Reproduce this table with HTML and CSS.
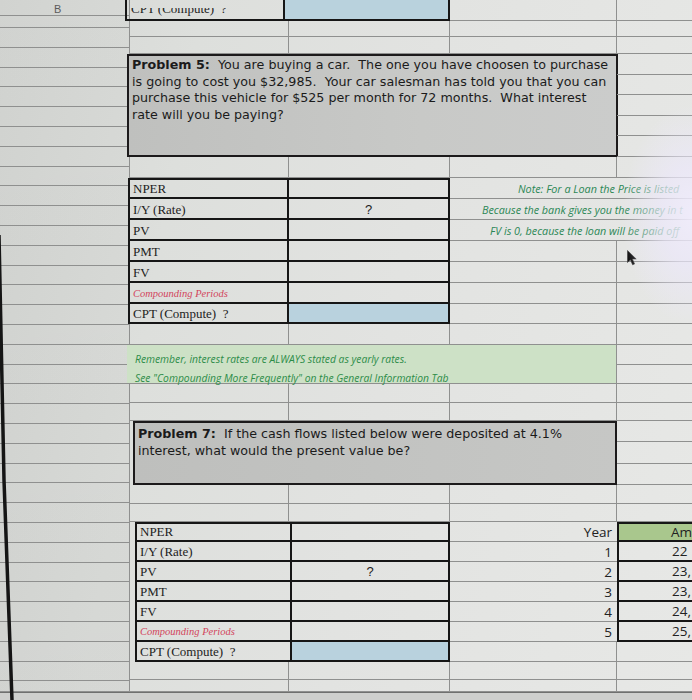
FILE: index.html
```html
<!DOCTYPE html>
<html lang="en">
<head>
<meta charset="utf-8">
<title>Problem sheet</title>
<link rel="stylesheet" href="styles.css">
</head>
<body>
<div class="screen">
  <div class="sheet">
    <div class="pane-a">
      <div class="a-hdr">B</div>
      <div class="a-row a-first"></div>
      <div class="a-row"></div><div class="a-row"></div><div class="a-row"></div><div class="a-row"></div><div class="a-row"></div>
      <div class="a-row"></div><div class="a-row"></div><div class="a-row"></div><div class="a-row"></div><div class="a-row"></div>
      <div class="a-row"></div><div class="a-row"></div><div class="a-row"></div><div class="a-row"></div><div class="a-row"></div>
      <div class="a-row"></div><div class="a-row"></div><div class="a-row"></div><div class="a-row"></div><div class="a-row"></div>
      <div class="a-row"></div><div class="a-row"></div><div class="a-row"></div><div class="a-row"></div><div class="a-row"></div>
      <div class="a-row"></div><div class="a-row"></div><div class="a-row"></div><div class="a-row"></div><div class="a-row"></div>
      <div class="a-row"></div><div class="a-row"></div><div class="a-row"></div>
      <div class="a-row a-last"></div>
    </div>

    <!-- row 1 -->
    <div class="top-table">
      <div class="tt-label"><span class="tt-text">CPT (Compute)&nbsp; ?</span></div>
      <div class="tt-value"></div>
    </div>
    <div class="c"></div><div class="c e"></div>
    <!-- rows 2-3 -->
    <div class="c"></div><div class="c"></div><div class="c"></div><div class="c e"></div>
    <div class="c"></div><div class="c"></div><div class="c"></div><div class="c e"></div>

    <!-- rows 4-8 -->
    <div class="problem p5">
      <p><b>Problem 5:</b>&nbsp; You are buying a car.&nbsp; The one you have choosen to purchase<br>is going to cost you $32,985.&nbsp; Your car salesman has told you that you can<br>purchase this vehicle for $525 per month for 72 months.&nbsp; What interest<br>rate will you be paying?</p>
    </div>
    <div class="c e"></div><div class="c e"></div><div class="c e"></div><div class="c e"></div><div class="c e"></div>

    <!-- row 9 -->
    <div class="c"></div><div class="c"></div><div class="c"></div><div class="c e"></div>

    <!-- rows 10-16 -->
    <div class="tvm t1">
      <div class="tl first">NPER</div><div class="tv first"></div>
      <div class="tl">I/Y (Rate)</div><div class="tv">?</div>
      <div class="tl">PV</div><div class="tv"></div>
      <div class="tl">PMT</div><div class="tv"></div>
      <div class="tl">FV</div><div class="tv"></div>
      <div class="tl cp">Compounding Periods</div><div class="tv"></div>
      <div class="tl">CPT (Compute)&nbsp; ?</div><div class="tv blue"></div>
    </div>
    <div class="note n1">Note: For a Loan the Price is listed</div>
    <div class="note n2">Because the bank gives you the money in t</div>
    <div class="note n3">FV is 0, because the loan will be paid off</div>
    <div class="c"></div>
    <div class="c e cur">
      <svg class="pointer" width="11" height="16" viewBox="0 0 11 16"><path d="M0.5 0.5 L0.5 12.5 L3.4 9.8 L5.6 14.8 L7.6 13.9 L5.4 9 L9.2 9 Z" fill="#111" stroke="#3a3a3a" stroke-width="0.6"/></svg>
    </div>
    <div class="c"></div><div class="c e"></div>
    <div class="c"></div><div class="c e"></div>
    <div class="c"></div><div class="c e"></div>

    <!-- row 17 -->
    <div class="c"></div><div class="c"></div><div class="c"></div><div class="c e"></div>

    <!-- rows 18-19 -->
    <div class="green">
      <p>Remember, interest rates are ALWAYS stated as yearly rates.</p>
      <p>See "Compounding More Frequently" on the General Information Tab</p>
    </div>
    <div class="c e"></div><div class="c e"></div>

    <!-- rows 20-21 -->
    <div class="c"></div><div class="c"></div><div class="c"></div><div class="c e"></div>
    <div class="c"></div><div class="c"></div><div class="c"></div><div class="c e"></div>

    <!-- rows 22-24 -->
    <div class="problem p7">
      <p><b>Problem 7:</b>&nbsp; If the cash flows listed below were deposited at 4.1%<br>interest, what would the present value be?</p>
    </div>
    <div class="c e"></div><div class="c e"></div><div class="c e"></div>

    <!-- rows 25-26 -->
    <div class="c"></div><div class="c"></div><div class="c"></div><div class="c e"></div>
    <div class="c"></div><div class="c"></div><div class="c"></div><div class="c e"></div>

    <!-- rows 27-33 -->
    <div class="tvm t2">
      <div class="tl first">NPER</div><div class="tv first"></div>
      <div class="tl">I/Y (Rate)</div><div class="tv"></div>
      <div class="tl">PV</div><div class="tv">?</div>
      <div class="tl">PMT</div><div class="tv"></div>
      <div class="tl">FV</div><div class="tv"></div>
      <div class="tl cp">Compounding Periods</div><div class="tv"></div>
      <div class="tl">CPT (Compute)&nbsp; ?</div><div class="tv blue"></div>
    </div>
    <div class="yr">Year</div><div class="amt hd">Am</div>
    <div class="yr">1</div><div class="amt">22</div>
    <div class="yr">2</div><div class="amt">23,</div>
    <div class="yr">3</div><div class="amt">23,</div>
    <div class="yr">4</div><div class="amt">24,</div>
    <div class="yr">5</div><div class="amt">25,</div>
    <div class="c"></div><div class="c e"></div>

    <!-- rows 34-35 -->
    <div class="c"></div><div class="c"></div><div class="c"></div><div class="c e"></div>
    <div class="c"></div><div class="c"></div><div class="c"></div><div class="c e"></div>
  </div>
  <div class="bottom"></div>

  <svg class="edge" width="20" height="700" viewBox="0 0 20 700"><polyline points="-1,235 4,480 12,700" fill="none" stroke="#151515" stroke-width="3.5"/></svg>
  <div class="glare"></div>
</div>
</body>
</html>
```

FILE: styles.css
```css
* { box-sizing: border-box; margin: 0; padding: 0; }
html, body { width: 692px; height: 700px; overflow: hidden; }
body { background: #d8dad7; font-family: "DejaVu Sans", Verdana, sans-serif; color: #1d1d1d; }

.screen {
  position: relative;
  width: 692px;
  height: 700px;
  overflow: hidden;
  background: linear-gradient(100deg, #d4d6d3 0%, #dddfdc 25%, #e2e3e1 55%, #e7e8e6 100%);
}

.sheet {
  display: grid;
  width: 692px;
  grid-template-columns: 130px 159px 161px 167px 75px;
  grid-template-rows:
    21px 16px 17px
    21px 20px 21px 20px 21px
    21px
    21px 21px 21px 21px 21px 21px 20px
    21px
    20px 19px
    19px 18px
    21px 22px 21px
    19px 18px
    20px 20px 20px 20px 20px 20px 20px
    18px 12px;
}

.c { border-right: 1px solid #8f908f; border-bottom: 1px solid #8f908f; }
.c.e { border-right: 0; }

/* frozen column pane */
.pane-a {
  grid-column: 1;
  grid-row: 1 / -1;
  display: flex;
  flex-direction: column;
  overflow: hidden;
  border-right: 1px solid #8f908f;
  background: linear-gradient(180deg, rgba(0,0,0,0.015), rgba(0,0,0,0.035));
}
.a-hdr {
  flex: 0 0 15px;
  border-bottom: 1px solid #8f908f;
  font: 11px "Liberation Sans", Arial, sans-serif;
  color: #5b5b5b;
  line-height: 12px;
  padding: 3px 0 0 54px;
}
.a-row { flex: 0 0 19.8px; border-bottom: 1px solid #8f908f; }
.a-first { flex-basis: 12px; }
.a-last { flex: 1 1 auto; }

/* partial table at the very top */
.top-table {
  grid-column: span 2;
  display: grid;
  grid-template-columns: 160px 1fr;
  margin-left: -5px;
}
.tt-label {
  border-left: 2px solid #161616;
  border-right: 2px solid #161616;
  border-bottom: 2px solid #161616;
  display: flex;
  align-items: flex-end;
  padding: 0 0 3px 4px;
}
.tt-text {
  display: block;
  font: 13px "Liberation Serif", "Times New Roman", serif;
  line-height: 14px;
  clip-path: inset(6px 0 0 0);
}
.tt-value {
  background: #b9d2dd;
  border-right: 2px solid #161616;
  border-bottom: 2px solid #161616;
}

/* problem boxes */
.problem {
  grid-column: span 3;
  border: 2px solid #1c1a1b;
  background: #c5c6c4;
  font-size: 12.7px;
  line-height: 16.5px;
  padding: 1px 3px;
  color: #1b1b1b;
  white-space: nowrap;
}
.p5 {
  grid-row: span 5;
  margin: 0 -1px 0 -3px;
  background: linear-gradient(90deg, #bfc0be, #c8c9c7 60%, #cbcccb);
}
.p7 {
  grid-row: span 3;
  margin-left: 3px;
  padding-top: 3px;
  background: linear-gradient(90deg, #bebfbd, #c6c7c5);
}

/* TVM tables */
.tvm {
  grid-column: span 2;
  display: grid;
  font: 13px "Liberation Serif", "Times New Roman", serif;
}
.t1 {
  grid-row: span 7;
  margin-left: -2px;
  grid-template-columns: 161px 1fr;
  grid-template-rows: 21px 21px 21px 21px 21px 21px 20px;
}
.t2 {
  grid-row: span 7;
  margin-left: 5px;
  grid-template-columns: 157px 1fr;
  grid-template-rows: repeat(7, 20px);
}
.tl, .tv {
  border-right: 2px solid #161616;
  border-bottom: 2px solid #161616;
  display: flex;
  align-items: flex-end;
  line-height: 15px;
  white-space: nowrap;
}
.tl { border-left: 2px solid #161616; padding: 0 0 1px 3px; }
.tv {
  justify-content: center;
  padding-bottom: 1px;
  font-family: "Liberation Sans", Arial, sans-serif;
}
.first { border-top: 2px solid #161616; }
.cp { color: #d2455c; font-style: italic; font-size: 10.5px; }
.blue { background: #b9d2de; }

/* note text overflowing across D:E */
.note {
  grid-column: span 2;
  border-bottom: 1px solid #8f908f;
  white-space: nowrap;
  overflow: hidden;
  font: italic 10.8px "Open Sans", sans-serif;
  color: #2b8755;
  display: flex;
  align-items: center;
}
.n1 { padding-left: 68px; }
.n2 { padding-left: 32px; }
.n3 { padding-left: 40px; }

.cur { position: relative; }
.pointer { position: absolute; left: 10px; top: 9px; }

/* green reminder */
.green {
  grid-column: span 3;
  grid-row: span 2;
  margin-left: -3px;
  background: #cde1c6;
  border-right: 1px solid #8f908f;
  border-bottom: 1px solid #8f908f;
  font: italic 10.3px "Open Sans", sans-serif;
  color: #2c8c48;
  padding: 5px 0 0 8px;
  line-height: 18.5px;
  white-space: nowrap;
}

/* year / amount table */
.yr {
  border-bottom: 1px solid #8f908f;
  display: flex;
  align-items: center;
  justify-content: flex-end;
  padding-right: 5px;
  font: 13.5px "Open Sans", sans-serif;
  color: #222;
}
.amt {
  border-left: 2px solid #161616;
  border-bottom: 2px solid #161616;
  display: flex;
  align-items: center;
  padding-left: 53px;
  font: 13.5px "Open Sans", sans-serif;
  color: #222;
  white-space: nowrap;
  overflow: hidden;
}
.amt.hd { background: #a9c78d; border-top: 2px solid #161616; padding-left: 52px; }

.bottom {
  height: 8px;
  background: #cecfcd;
  border-top: 1px solid #6f706f;
}

.edge { position: absolute; left: 0; top: 0; }
.glare {
  position: absolute;
  right: 0;
  top: 105px;
  width: 85px;
  height: 220px;
  pointer-events: none;
  background: radial-gradient(ellipse 70px 110px at 100% 50%, rgba(240,236,252,0.92) 0%, rgba(236,232,250,0.7) 45%, rgba(232,230,246,0) 100%);
}
```
